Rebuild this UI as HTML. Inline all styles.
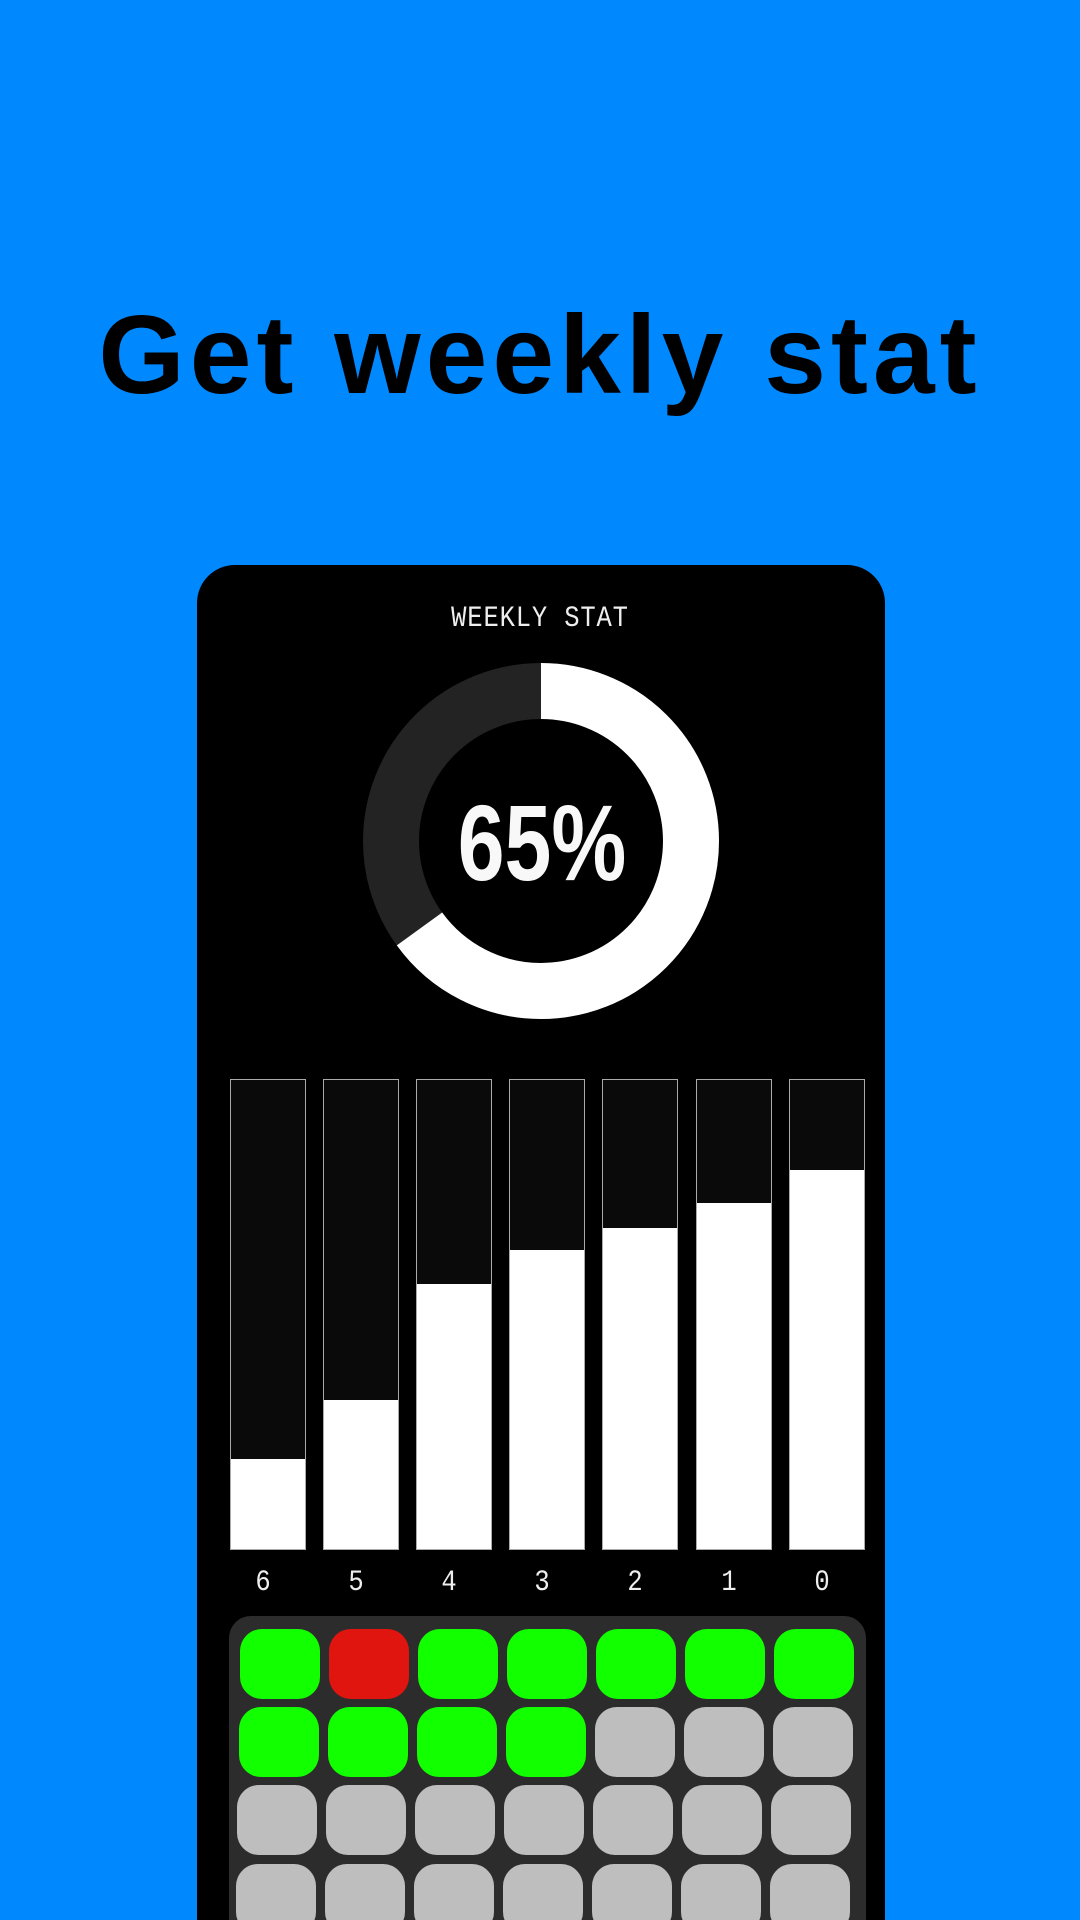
<!DOCTYPE html>
<html><head><meta charset="utf-8"><style>
*{margin:0;padding:0;box-sizing:border-box}
html,body{width:1080px;height:1920px;overflow:hidden}
body{background:#0088ff;position:relative;font-family:"Liberation Sans",sans-serif}
.title{position:absolute;left:0;width:1080px;top:290px;text-align:center;font-weight:bold;font-size:111px;letter-spacing:5px;color:#000;line-height:130px}
.card{position:absolute;left:197px;top:565px;width:688px;height:1355px;background:#000;border-radius:38px 38px 0 0}
.ws{position:absolute;left:0;width:1080px;top:602px;text-align:center;color:#eee;font-family:"Liberation Mono",monospace;font-size:30px;letter-spacing:1px;transform:scaleX(0.85)}
.bar{position:absolute;top:1079px;width:76px;height:471px;background:#0a0a0a;border:1.5px solid #aaa}
.bar i{position:absolute;left:0;right:0;bottom:0;background:#fff}
.lbl{position:absolute;top:1566px;width:76px;text-align:center;color:#eee;font-family:"Liberation Mono",monospace;font-size:30px;transform:scaleX(0.85)}
.panel{position:absolute;left:229px;top:1616px;width:637px;height:304px;background:#2c2c2c;border-radius:22px 22px 0 0}
.c{position:absolute;width:80px;height:70px;border-radius:22px;background:#bebebe}
.g{background:#12ff00}.r{background:#e01510}
</style></head><body>
<div class="title">Get weekly stat</div>
<div class="card"></div>
<div class="ws">WEEKLY STAT</div>
<svg style="position:absolute;left:0;top:0" width="1080" height="1920">
<circle cx="541" cy="841" r="150" fill="none" stroke="#232323" stroke-width="56"/>
<circle cx="541" cy="841" r="150" fill="none" stroke="#fff" stroke-width="56" stroke-dasharray="612.6 1000" transform="rotate(-90 541 841)"/>
<text x="0" y="0" text-anchor="middle" fill="#f8f8f8" font-family="Liberation Sans, sans-serif" font-size="108" font-weight="bold" transform="translate(542 880) scale(0.78 1)">65%</text>
</svg>
<div class="bar" style="left:230px"><i style="height:90px"></i></div>
<div class="bar" style="left:323px"><i style="height:149px"></i></div>
<div class="bar" style="left:416px"><i style="height:265px"></i></div>
<div class="bar" style="left:509px"><i style="height:299px"></i></div>
<div class="bar" style="left:602px"><i style="height:321px"></i></div>
<div class="bar" style="left:696px"><i style="height:346px"></i></div>
<div class="bar" style="left:789px"><i style="height:379px"></i></div>
<div class="lbl" style="left:225px">6</div>
<div class="lbl" style="left:318px">5</div>
<div class="lbl" style="left:411px">4</div>
<div class="lbl" style="left:504px">3</div>
<div class="lbl" style="left:597px">2</div>
<div class="lbl" style="left:691px">1</div>
<div class="lbl" style="left:784px">0</div>
<div class="panel"></div>
<div class="c g" style="left:240px;top:1629px"></div>
<div class="c r" style="left:329px;top:1629px"></div>
<div class="c g" style="left:418px;top:1629px"></div>
<div class="c g" style="left:507px;top:1629px"></div>
<div class="c g" style="left:596px;top:1629px"></div>
<div class="c g" style="left:685px;top:1629px"></div>
<div class="c g" style="left:774px;top:1629px"></div>
<div class="c g" style="left:239px;top:1707px"></div>
<div class="c g" style="left:328px;top:1707px"></div>
<div class="c g" style="left:417px;top:1707px"></div>
<div class="c g" style="left:506px;top:1707px"></div>
<div class="c" style="left:595px;top:1707px"></div>
<div class="c" style="left:684px;top:1707px"></div>
<div class="c" style="left:773px;top:1707px"></div>
<div class="c" style="left:237px;top:1785px"></div>
<div class="c" style="left:326px;top:1785px"></div>
<div class="c" style="left:415px;top:1785px"></div>
<div class="c" style="left:504px;top:1785px"></div>
<div class="c" style="left:593px;top:1785px"></div>
<div class="c" style="left:682px;top:1785px"></div>
<div class="c" style="left:771px;top:1785px"></div>
<div class="c" style="left:236px;top:1864px"></div>
<div class="c" style="left:325px;top:1864px"></div>
<div class="c" style="left:414px;top:1864px"></div>
<div class="c" style="left:503px;top:1864px"></div>
<div class="c" style="left:592px;top:1864px"></div>
<div class="c" style="left:681px;top:1864px"></div>
<div class="c" style="left:770px;top:1864px"></div>
</body></html>
